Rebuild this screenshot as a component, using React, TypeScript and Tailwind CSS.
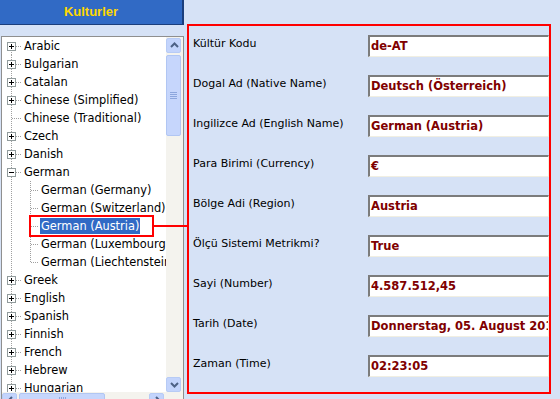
import React from 'react';

type Row = { label: string; level: 0 | 1; box?: 'plus' | 'minus'; selected?: boolean; last?: boolean };

const rows: Row[] = [
  { label: 'Arabic', level: 0, box: 'plus' },
  { label: 'Bulgarian', level: 0, box: 'plus' },
  { label: 'Catalan', level: 0, box: 'plus' },
  { label: 'Chinese (Simplified)', level: 0, box: 'plus' },
  { label: 'Chinese (Traditional)', level: 0 },
  { label: 'Czech', level: 0, box: 'plus' },
  { label: 'Danish', level: 0, box: 'plus' },
  { label: 'German', level: 0, box: 'minus' },
  { label: 'German (Germany)', level: 1 },
  { label: 'German (Switzerland)', level: 1 },
  { label: 'German (Austria)', level: 1, selected: true },
  { label: 'German (Luxembourg)', level: 1 },
  { label: 'German (Liechtenstein)', level: 1, last: true },
  { label: 'Greek', level: 0, box: 'plus' },
  { label: 'English', level: 0, box: 'plus' },
  { label: 'Spanish', level: 0, box: 'plus' },
  { label: 'Finnish', level: 0, box: 'plus' },
  { label: 'French', level: 0, box: 'plus' },
  { label: 'Hebrew', level: 0, box: 'plus' },
  { label: 'Hungarian', level: 0, box: 'plus' },
];

const fields = [
  { label: 'Kültür Kodu', value: 'de-AT' },
  { label: 'Dogal Ad (Native Name)', value: 'Deutsch (Österreich)' },
  { label: 'Ingilizce Ad (English Name)', value: 'German (Austria)' },
  { label: 'Para Birimi (Currency)', value: '€' },
  { label: 'Bölge Adi (Region)', value: 'Austria' },
  { label: 'Ölçü Sistemi Metrikmi?', value: 'True' },
  { label: 'Sayi (Number)', value: '4.587.512,45' },
  { label: 'Tarih (Date)', value: 'Donnerstag, 05. August 2010' },
  { label: 'Zaman (Time)', value: '02:23:05' },
];

const dot = { stroke: '#a0a0a0', strokeWidth: 1, strokeDasharray: '1 1' };

const Connector: React.FC<{ row: Row; first: boolean }> = ({ row, first }) => {
  const w = row.level === 0 ? 21 : 38;
  return (
    <svg width={w} height={18} className="shrink-0">
      <line x1={9.5} y1={first ? 9 : 0} x2={9.5} y2={18} {...dot} />
      {row.level === 0 && <line x1={10} y1={9.5} x2={19} y2={9.5} {...dot} />}
      {row.level === 1 && (
        <>
          <line x1={28.5} y1={0} x2={28.5} y2={row.last ? 10 : 18} {...dot} />
          <line x1={29} y1={9.5} x2={37} y2={9.5} {...dot} />
        </>
      )}
      {row.box && (
        <>
          <rect x={5.5} y={5.5} width={8} height={8} fill="#fff" stroke="#919b9c" />
          <line x1={7} y1={9.5} x2={12} y2={9.5} stroke="#000" />
          {row.box === 'plus' && <line x1={9.5} y1={7} x2={9.5} y2={12} stroke="#000" />}
        </>
      )}
    </svg>
  );
};

const ScrollBtn: React.FC<{ dir: 'up' | 'down' | 'left' | 'right' }> = ({ dir }) => {
  const pts = {
    up: '4,9 7.5,5.5 11,9',
    down: '4,6 7.5,9.5 11,6',
    left: '9,4 5.5,7.5 9,11',
    right: '6,4 9.5,7.5 6,11',
  }[dir];
  return (
    <div className="w-[15px] h-[15px] shrink-0 rounded-[2px] border border-[#b7cbf5] bg-[#c3d4fc] flex items-center justify-center">
      <svg width={15} height={15}>
        <polyline points={pts} fill="none" stroke="#4d6185" strokeWidth={2} />
      </svg>
    </div>
  );
};

export default function App() {
  return (
    <div className="relative w-[560px] h-[399px] overflow-hidden bg-[#d6e2f6] flex items-start" style={{ fontFamily: '"DejaVu Sans", Verdana, sans-serif' }}>
      <div className="w-[184px] shrink-0 flex flex-col">
        <div className="w-[184px] h-[25px] shrink-0 bg-[#316ac5] border-r-2 border-b border-[#1b3e7c] flex items-center justify-center">
          <span className="text-[#ffd800] font-bold text-[13px]" style={{ fontFamily: '"Liberation Sans", Arial, sans-serif' }}>Kulturler</span>
        </div>
        <div className="mt-[11px] ml-[1px] w-[183px] h-[380px] shrink-0 border border-[#8f8f8f] bg-white flex flex-col">
          <div className="flex h-[355px] shrink-0">
            <div className="w-[164px] overflow-hidden text-[11.4px] leading-[18px] text-black">
              {rows.map((r, i) => (
                <div key={r.label} className="h-[18px] flex items-center whitespace-nowrap">
                  <Connector row={r} first={i === 0} />
                  <span className={r.selected ? 'bg-[#316ac5] text-white px-[1px] h-[16px] leading-[16px]' : 'px-[1px]'}>{r.label}</span>
                </div>
              ))}
            </div>
            <div className="w-[17px] bg-[#f4f3ee] flex flex-col">
              <div className="mt-[1px]"><ScrollBtn dir="up" /></div>
              <div className="mt-[2px] w-[15px] h-[81px] shrink-0 rounded-[2px] border border-[#b1c6f3] bg-[#c6d6fc] flex flex-col items-center justify-center gap-[1px]">
                <div className="w-[7px] h-[1px] bg-[#8ca6dd]" />
                <div className="w-[7px] h-[1px] bg-[#8ca6dd]" />
                <div className="w-[7px] h-[1px] bg-[#8ca6dd]" />
                <div className="w-[7px] h-[1px] bg-[#8ca6dd]" />
              </div>
              <div className="flex-1" />
              <ScrollBtn dir="down" />
            </div>
          </div>
          <div className="flex h-[17px] shrink-0 bg-[#f4f3ee] pt-[1px]">
            <ScrollBtn dir="left" />
            <div className="ml-[2px] w-[86px] h-[15px] rounded-[2px] border border-[#b1c6f3] bg-[#c6d6fc] flex items-center justify-center gap-[1px]">
              <div className="w-[1px] h-[7px] bg-[#8ca6dd]" />
              <div className="w-[1px] h-[7px] bg-[#8ca6dd]" />
              <div className="w-[1px] h-[7px] bg-[#8ca6dd]" />
              <div className="w-[1px] h-[7px] bg-[#8ca6dd]" />
            </div>
            <div className="flex-1" />
            <div className="mr-[19px]"><ScrollBtn dir="right" /></div>
          </div>
        </div>
      </div>

      <div className="ml-[3px] mt-[24px] w-[364px] h-[370px] border-2 border-[#ff0000] pt-[9px] pl-[4px] flex flex-col gap-[18px] shrink-0">
        {fields.map((f) => (
          <div key={f.label} className="flex h-[22px] shrink-0">
            <div className="w-[175px] pt-[2px] text-[11px] leading-[13px] text-black whitespace-nowrap">{f.label}</div>
            <div className="flex-1 overflow-hidden bg-white border-t-2 border-l-2 border-b border-r border-t-[#7c7c7c] border-l-[#7c7c7c] border-b-[#f1efe2] border-r-[#f1efe2] flex items-center pl-[1px]">
              <span className="text-[#800000] font-bold text-[11.5px] whitespace-nowrap">{f.value}</span>
            </div>
          </div>
        ))}
      </div>

      <div className="absolute left-[29px] top-[215px] w-[125px] h-[22px] border-2 border-[#ff0000]" />
      <div className="absolute left-[154px] top-[225px] w-[33px] h-[2px] bg-[#ff0000]" />
    </div>
  );
}
